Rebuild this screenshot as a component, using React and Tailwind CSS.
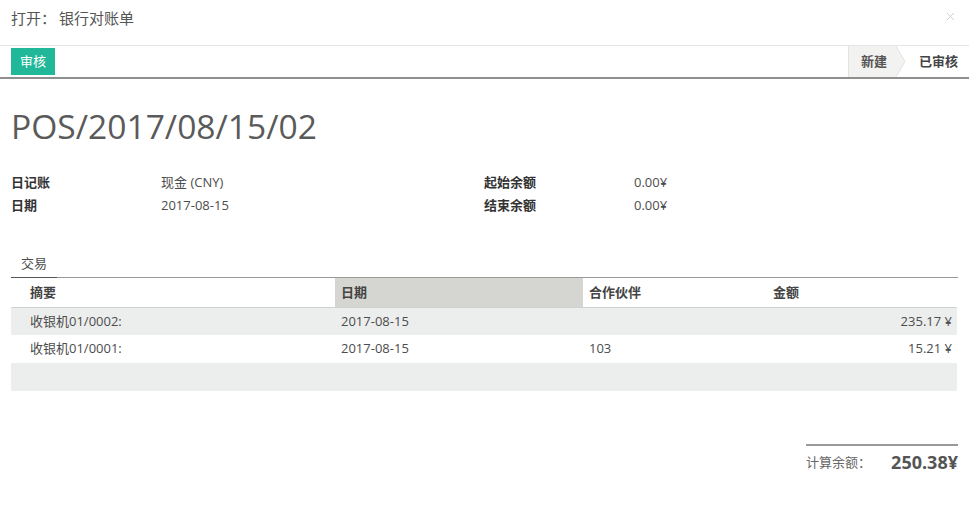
import { X } from "lucide-react";

const rows = [
  { memo: "收银机01/0002:", date: "2017-08-15", partner: "", amount: "235.17 ¥" },
  { memo: "收银机01/0001:", date: "2017-08-15", partner: "103", amount: "15.21 ¥" },
];

function App() {
  return (
    <div className="w-[969px] h-[505px] bg-white text-[13px] text-[#4c4c4c] font-['Open_Sans','Noto_Sans_CJK_SC',sans-serif] overflow-hidden">
      {/* modal header */}
      <div className="h-[46px] flex items-start justify-between border-b border-[#e5e5e5] px-[11px] pt-[7px]">
        <h4 className="text-[15px] leading-[22px] text-[#555]">
          打开：<span className="ml-[3px]">银行对账单</span>
        </h4>
        <X className="w-[13px] h-[13px] mt-[3px] mr-[1px] text-[#c8c8c8]" strokeWidth={1.6} />
      </div>

      {/* toolbar */}
      <div className="h-[33px] flex items-center justify-between border-b-2 border-[#8f8f8f] pl-[11px]">
        <button className="h-[27px] px-[9px] bg-[#21b799] text-white text-[13px]">审核</button>
        <div className="flex h-full items-stretch">
          <div className="relative flex items-center bg-[#f2f2f0] border-l border-[#e3e3e3] pl-[12px] pr-[9px] text-[#555] font-bold">
            新建
            <svg className="absolute left-full top-0 h-full w-[9px]" viewBox="0 0 9 31" preserveAspectRatio="none">
              <path d="M0 0 L9 15.5 L0 31 Z" fill="#f2f2f0" />
              <path d="M0 0 L9 15.5 L0 31" fill="none" stroke="#e3e3e3" strokeWidth="1" />
            </svg>
          </div>
          <div className="flex items-center pl-[23px] pr-[11px] text-[#444] font-bold">已审核</div>
        </div>
      </div>

      {/* sheet */}
      <div className="px-[11px]">
        <h1 className="mt-[26px] text-[33.6px] leading-[42px] text-[#5a5a5a]">POS/2017/08/15/02</h1>

        <div className="mt-[24px] grid grid-cols-[150px_323px_150px_1fr] leading-[23px]">
          <div className="font-bold text-[#333]">日记账</div>
          <div>现金 (CNY)</div>
          <div className="font-bold text-[#333]">起始余额</div>
          <div>0.00¥</div>
          <div className="font-bold text-[#333]">日期</div>
          <div>2017-08-15</div>
          <div className="font-bold text-[#333]">结束余额</div>
          <div>0.00¥</div>
        </div>

        {/* notebook tabs */}
        <div className="mt-[37px] flex border-b border-[#9a9a9a]">
          <div className="px-[10px] pb-[5px] leading-[18px] border-b border-[#555] -mb-px">交易</div>
        </div>

        <table className="w-[946px] table-fixed border-collapse">
          <colgroup>
            <col className="w-[324px]" />
            <col className="w-[248px]" />
            <col className="w-[184px]" />
            <col className="w-[190px]" />
          </colgroup>
          <thead>
            <tr className="h-[29px] border-b border-[#d0d0d0] text-left font-bold text-[#444]">
              <th className="pl-[19px]">摘要</th>
              <th className="pl-[6px] bg-[#d5d5d1]">日期</th>
              <th className="pl-[6px]">合作伙伴</th>
              <th className="pl-[6px]">金额</th>
            </tr>
          </thead>
          <tbody>
            {rows.map((r, i) => (
              <tr key={i} className={i % 2 === 0 ? "h-[28px] bg-[#eceeed]" : "h-[28px] bg-white"}>
                <td className="pl-[19px]">{r.memo}</td>
                <td className="pl-[6px]">{r.date}</td>
                <td className="pl-[6px]">{r.partner}</td>
                <td className="pr-[5px] text-right">{r.amount}</td>
              </tr>
            ))}
            <tr className="h-[28px] bg-[#eceeed]">
              <td colSpan={4}></td>
            </tr>
          </tbody>
        </table>

        {/* total */}
        <div className="mt-[53px] flex justify-end">
          <div className="w-[152px] border-t-2 border-[#999] flex items-center justify-between pt-[3px]">
            <span className="text-[#666]">计算余额：</span>
            <span className="text-[18px] font-bold text-[#555]">250.38¥</span>
          </div>
        </div>
      </div>
    </div>
  );
}

export default App;
